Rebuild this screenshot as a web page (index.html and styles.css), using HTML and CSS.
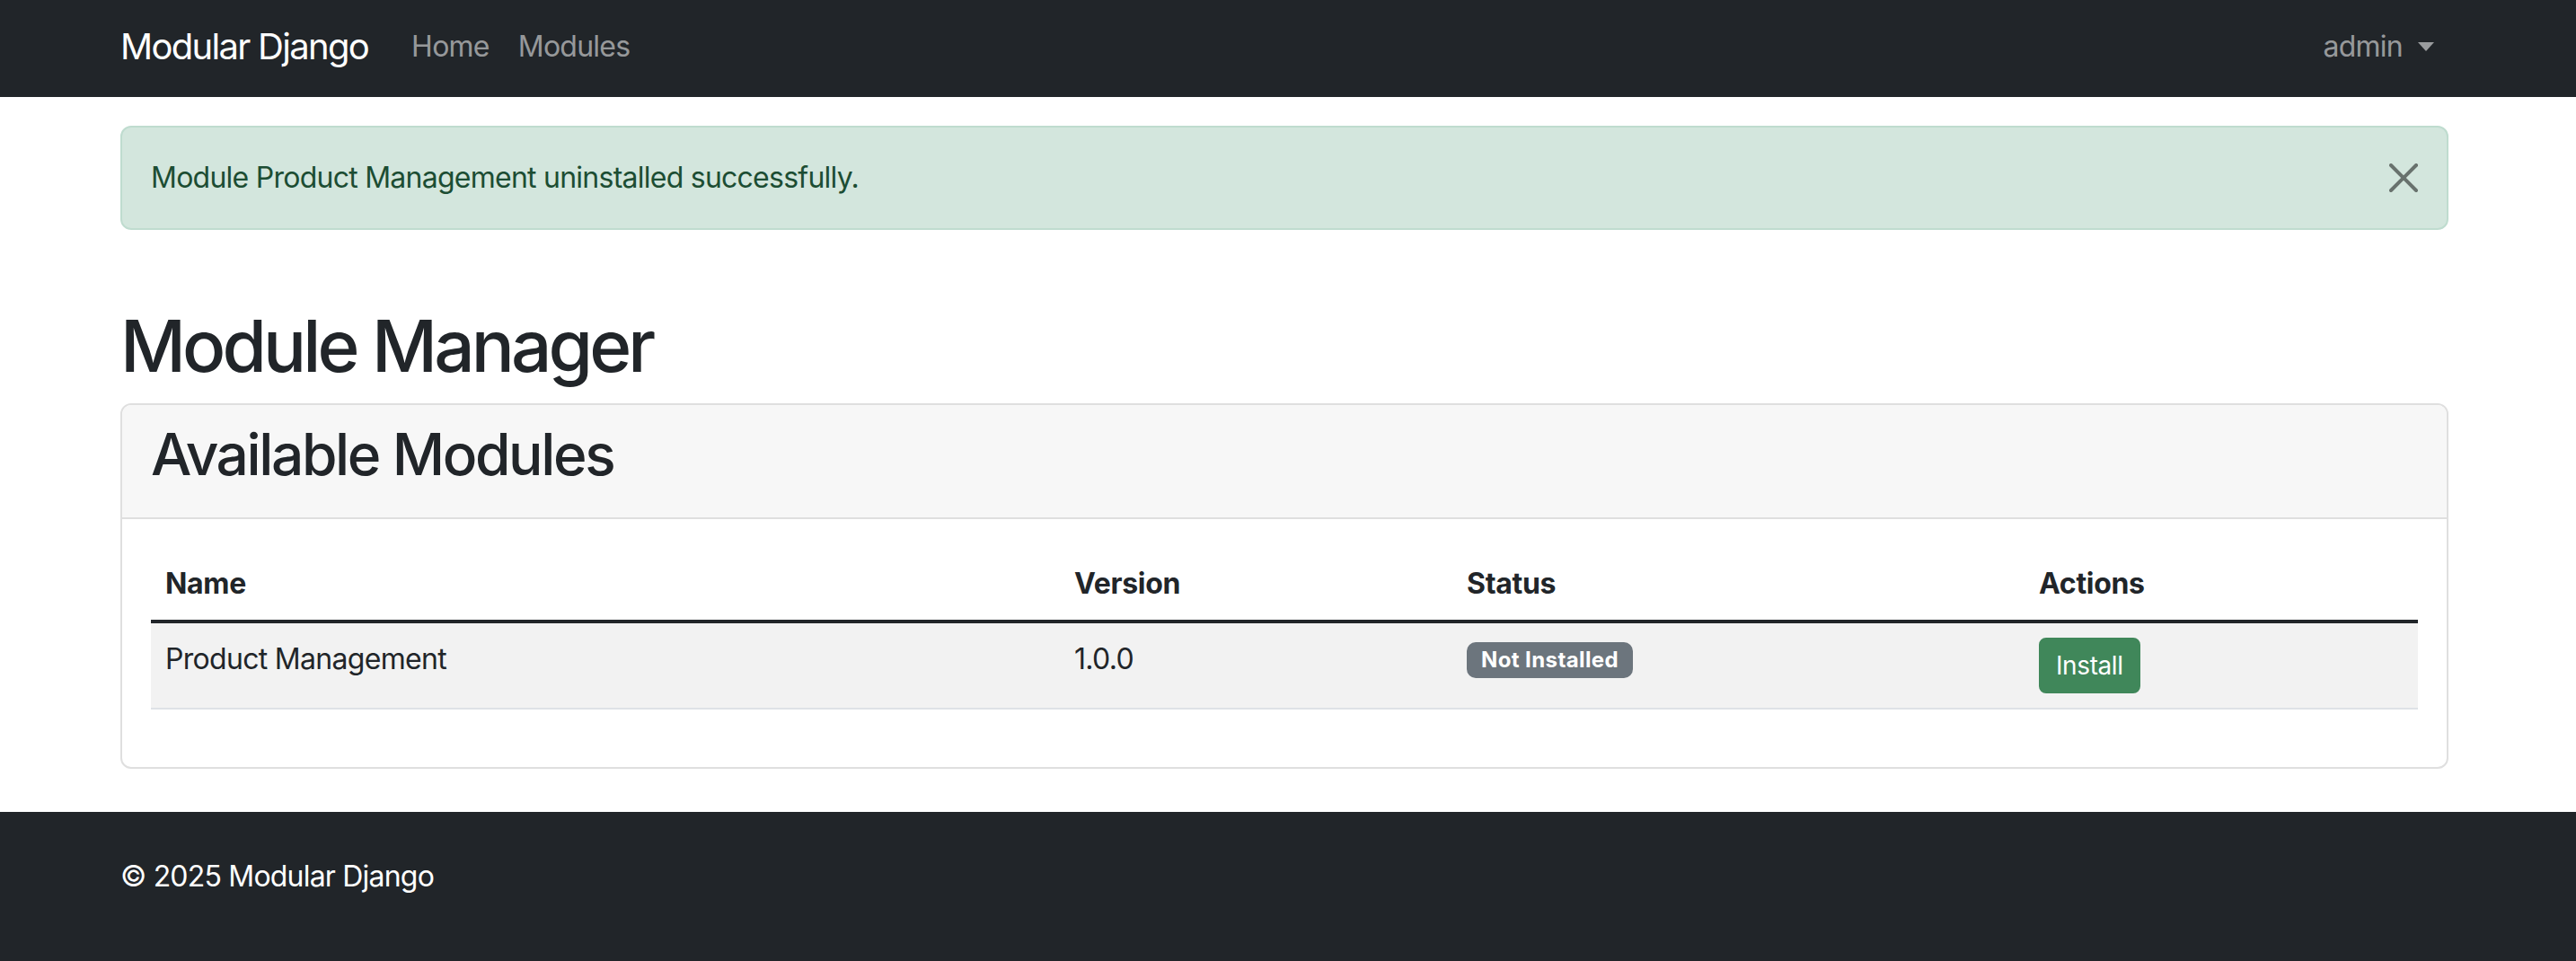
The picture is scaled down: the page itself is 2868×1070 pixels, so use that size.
FILE: index.html
```html
<!DOCTYPE html>
<html lang="en">
<head>
<meta charset="utf-8">
<title>Module Manager</title>
<link rel="stylesheet" href="styles.css">
</head>
<body>
<nav class="navbar">
  <div class="nav-inner">
    <a class="brand" href="#">Modular Django</a>
    <ul class="nav-links">
      <li><a href="#">Home</a></li>
      <li><a href="#">Modules</a></li>
    </ul>
    <div class="nav-user">
      <a class="dropdown-toggle" href="#">admin<span class="caret"></span></a>
    </div>
  </div>
</nav>

<main class="container">
  <div class="alert">
    <span class="alert-text">Module Product Management uninstalled successfully.</span>
    <button class="btn-close" type="button" aria-label="Close">
      <svg viewBox="0 0 16 16" width="32" height="32"><path d="M.293.293a1 1 0 0 1 1.414 0L8 6.586 14.293.293a1 1 0 1 1 1.414 1.414L9.414 8l6.293 6.293a1 1 0 0 1-1.414 1.414L8 9.414l-6.293 6.293a1 1 0 0 1-1.414-1.414L6.586 8 .293 1.707a1 1 0 0 1 0-1.414z"/></svg>
    </button>
  </div>

  <h1 class="page-title">Module Manager</h1>

  <div class="card">
    <div class="card-header">
      <h2 class="card-title">Available Modules</h2>
    </div>
    <div class="card-body">
      <table class="table">
        <colgroup>
          <col class="col-name">
          <col class="col-version">
          <col class="col-status">
          <col class="col-actions">
        </colgroup>
        <thead>
          <tr>
            <th>Name</th>
            <th>Version</th>
            <th>Status</th>
            <th>Actions</th>
          </tr>
        </thead>
        <tbody>
          <tr>
            <td>Product Management</td>
            <td>1.0.0</td>
            <td><span class="badge">Not Installed</span></td>
            <td><button class="btn-install" type="button">Install</button></td>
          </tr>
        </tbody>
      </table>
    </div>
  </div>
</main>

<footer class="footer">
  <div class="footer-inner">© 2025 Modular Django</div>
</footer>
</body>
</html>
```

FILE: styles.css
```css
* { box-sizing: border-box; }

html, body {
  margin: 0;
  padding: 0;
}

body {
  font-family: Inter, "Noto Sans", "Liberation Sans", sans-serif;
  font-size: 32px;
  line-height: 48px;
  color: #212529;
  background: #fff;
  letter-spacing: -0.75px;
}

a { text-decoration: none; }

/* Navbar */
.navbar {
  background: #212529;
  height: 108px;
}

.nav-inner {
  width: 2592px;
  margin-left: 134px;
  height: 108px;
  display: flex;
  align-items: center;
  padding-bottom: 4px;
}

.brand {
  color: #fff;
  font-size: 40px;
  line-height: 60px;
  margin-right: 32px;
  letter-spacing: -1.7px;
}

.nav-links {
  list-style: none;
  margin: 0;
  padding: 0;
  display: flex;
}

.nav-links a {
  display: block;
  padding: 0 16px;
  color: rgba(255, 255, 255, 0.55);
  font-size: 32px;
  line-height: 48px;
}

.nav-user {
  margin-left: auto;
}

.dropdown-toggle {
  display: flex;
  align-items: center;
  padding: 0 16px;
  color: rgba(255, 255, 255, 0.55);
  font-size: 32px;
  line-height: 48px;
}

.caret {
  display: inline-block;
  width: 0;
  height: 0;
  margin-left: 17px;
  border-top: 10px solid rgba(255, 255, 255, 0.55);
  border-left: 9px solid transparent;
  border-right: 9px solid transparent;
}

/* Container */
.container {
  width: 2592px;
  margin-left: 134px;
}

/* Alert */
.alert {
  margin-top: 32px;
  margin-bottom: 81px;
  display: flex;
  align-items: center;
  padding: 32px;
  background: #d3e6dd;
  border: 2px solid #bfdccf;
  border-radius: 12px;
  color: #1c4d33;
  height: 116px;
}

.alert-text {
  flex: 1;
}

.btn-close {
  width: 32px;
  height: 32px;
  padding: 0;
  margin: 0;
  border: 0;
  background: transparent;
  display: flex;
  align-items: center;
  justify-content: center;
  opacity: 0.5;
  cursor: pointer;
}

.btn-close svg {
  display: block;
  fill: #000;
}

/* Headings */
.page-title {
  margin: 0 0 16px 0;
  font-size: 80px;
  line-height: 96px;
  font-weight: 500;
  letter-spacing: -3.9px;
}

/* Card */
.card {
  border: 2px solid #dfdfdf;
  border-radius: 12px;
  overflow: hidden;
}

.card-header {
  background: #f7f7f7;
  padding: 16px 32px;
  border-bottom: 2px solid #dfdfdf;
}

.card-title {
  margin: 0 0 16px 0;
  font-size: 64px;
  line-height: 77px;
  font-weight: 500;
  letter-spacing: -2.4px;
}

.card-body {
  padding: 32px;
}

/* Table */
.table {
  width: 100%;
  border-collapse: collapse;
  margin-bottom: 32px;
  table-layout: fixed;
  vertical-align: top;
}

.col-name { width: 1012px; }
.col-version { width: 437px; }
.col-status { width: 637px; }
.col-actions { width: 438px; }

.table th,
.table td {
  padding: 16px;
  text-align: left;
  vertical-align: top;
  border-bottom: 2px solid #dee2e6;
}

.table th {
  font-weight: 700;
  letter-spacing: -0.3px;
  border-bottom: 4px solid #212529;
}

.table td {
  letter-spacing: -0.7px;
}

.table tbody tr {
  background: #f2f2f2;
}

.badge {
  display: inline-block;
  padding: 8px 16px;
  font-size: 24px;
  line-height: 24px;
  font-weight: 700;
  color: #fff;
  background: #6c757d;
  border-radius: 10px;
  vertical-align: 2px;
  letter-spacing: 0.4px;
}

.btn-install {
  display: inline-block;
  font-family: inherit;
  font-size: 28px;
  line-height: 42px;
  padding: 8px 17px;
  color: #fff;
  background: #40875a;
  border: 2px solid #40875a;
  border-radius: 8px;
  letter-spacing: -0.4px;
  cursor: pointer;
}

/* Footer */
.footer {
  margin-top: 48px;
  background: #212529;
  padding: 48px 0 100px 0;
}

.footer-inner {
  width: 2592px;
  margin-left: 134px;
  color: #fff;
  letter-spacing: -0.8px;
}
```
